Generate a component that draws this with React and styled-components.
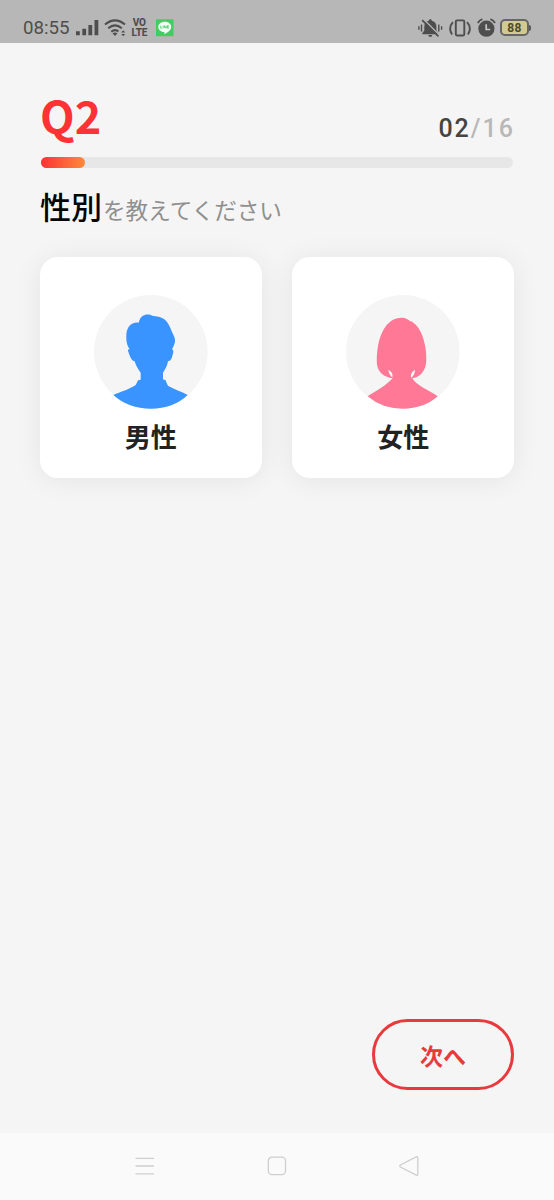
import styled, { createGlobalStyle } from "styled-components";

function App() {
	return (
		<Screen>
			<GlobalStyle />
			<StatusBar>
				<StatusGroup>
					<Clock>08:55</Clock>
					<SignalIcon />
					<WifiIcon />
					<VolteMark>
						<VolteLine>VO</VolteLine>
						<VolteLine>LTE</VolteLine>
					</VolteMark>
					<LineIcon />
				</StatusGroup>
				<StatusGroup>
					<MutedIcon />
					<VibrateIcon />
					<AlarmIcon />
					<Battery>
						<BatteryBody>88</BatteryBody>
						<BatteryTip />
					</Battery>
				</StatusGroup>
			</StatusBar>
			<Content>
				<QuestionHeader>
					<QuestionNumber>Q2</QuestionNumber>
					<Counter>
						<CounterNow>02</CounterNow>/16
					</Counter>
				</QuestionHeader>
				<ProgressTrack>
					<ProgressFill />
				</ProgressTrack>
				<Question>
					<Keyword>性別</Keyword>を教えてください
				</Question>
				<CardList>
					<Card>
						<MaleAvatar />
						<CardLabel>男性</CardLabel>
					</Card>
					<Card>
						<FemaleAvatar />
						<CardLabel>女性</CardLabel>
					</Card>
				</CardList>
				<NextButton>次へ</NextButton>
			</Content>
			<NavBar>
				<svg width="20" height="20" viewBox="0 0 20 20" fill="none" stroke="#cecece" strokeWidth="1.3">
					<path d="M0.5 2.4H19M0.5 10H19M0.5 17.8H19" />
				</svg>
				<svg width="20" height="20" viewBox="0 0 20 20" fill="none" stroke="#cecece" strokeWidth="1.3">
					<rect x="1.3" y="1.2" width="17.2" height="17.4" rx="3.6" />
				</svg>
				<svg width="20" height="20" viewBox="0 0 20 20" fill="none" stroke="#cecece" strokeWidth="1.3">
					<path d="M17.2 0.8 1.4 9Q0 10 1.4 11L17.2 19.2Q18.8 19.8 18.8 18V2Q18.8 0.2 17.2 0.8Z" />
				</svg>
			</NavBar>
		</Screen>
	);
}

function SignalIcon() {
	return (
		<Icon width="23" height="18" viewBox="0 0 23 18" $left="7.3px">
			<path d="M0 12.3h3.8v4H0zM6.3 9.7h3.8v6.6H6.3zM12.4 6h3.8v10.3h-3.8zM18.5 1h3.8v15.3h-3.8z" fill="#4e4e4e" />
		</Icon>
	);
}
function WifiIcon() {
	return (
		<Icon width="23" height="18" viewBox="0 0 23 18" $left="5px">
			<g fill="none" stroke="#4e4e4e" strokeWidth="2.1">
				<path d="M1 5.5Q11 -2.6 21 5.5" />
				<path d="M4.2 9.2Q11 3.4 17.8 9.2" />
				<path d="M7.3 12.7Q11 9.6 14.4 12.4" />
			</g>
			<path d="M8.5 14.2Q11 12.6 13.5 14.2L11 17Z" fill="#4e4e4e" />
			<path d="m19.2 11.2 2 2.4h-4zM19.2 17.3l-2-2.4h4z" fill="#4e4e4e" />
		</Icon>
	);
}
function LineIcon() {
	return (
		<Icon width="18" height="18" viewBox="0 0 18 18" $left="8.5px">
			<path d="M0 0.3H17.5V17.2H0Z" fill="#43cc62" />
			<path d="M8.8 2.8c-3.7 0-6.5 2.2-6.5 5.2 0 2.7 2.4 4.8 5.7 5.1.6.1.6.7.4 2.1 3.2-1.7 6.8-4 6.8-7.2 0-3-2.8-5.2-6.4-5.2Z" fill="#f8fff9" />
			<path d="M4.7 6.6v2.6h1.4M7.1 6.6v2.6M8.3 9.2V6.6l1.8 2.6V6.6M12.9 6.6h-1.5v2.6h1.5M11.4 7.9h1.4" fill="none" stroke="#43cc62" strokeWidth="0.8" />
		</Icon>
	);
}
function MutedIcon() {
	return (
		<Icon width="25" height="20" viewBox="0 0 25 20">
			<path d="M12.3 1.2c.9 0 1.5.5 1.5 1.5 3 .7 4.6 3 4.6 5.7v4.2l2 2.6v1H4.3v-1l2-2.6V8.4c0-2.7 1.5-5 4.5-5.7 0-1 .6-1.5 1.5-1.5ZM10.3 17h4q-.3 1.9-2 1.9t-2-1.9Z" fill="#4e4e4e" />
			<path d="M5.3 1 21.6 17.2" stroke="#b7b7b7" strokeWidth="1.4" />
			<path d="M4.2 2.1 20.4 18.3" stroke="#4e4e4e" strokeWidth="1.7" />
			<path d="M.9 8.3v3.4M3.5 6.5v7M20.8 6.5v7M23.6 8.3v3.4" stroke="#4e4e4e" strokeWidth="1.4" />
		</Icon>
	);
}
function VibrateIcon() {
	return (
		<Icon width="22" height="20" viewBox="0 0 22 20" $left="6px">
			<g fill="none" stroke="#4e4e4e" strokeWidth="1.9">
				<rect x="6.8" y="2.4" width="8.5" height="15.1" rx="1.2" />
				<path d="M3.9 4.2Q-1.2 10 3.1 16.6M18.1 4.2Q23.2 10 18.9 16.6" />
			</g>
		</Icon>
	);
}
function AlarmIcon() {
	return (
		<Icon width="19" height="20" viewBox="0 0 19 20" $left="6.3px">
			<circle cx="9.4" cy="10.7" r="8.1" fill="#4e4e4e" />
			<path d="M.8 5Q2.3 2.2 5.4 1.1M18 5Q16.5 2.2 13.4 1.1" fill="none" stroke="#4e4e4e" strokeWidth="1.8" />
			<path d="M9.2 6.2v5.3h4" fill="none" stroke="#c6c6c6" strokeWidth="1.7" />
		</Icon>
	);
}
function MaleAvatar() {
	return (
		<Avatar viewBox="41 44 341 341">
			<circle cx="211.5" cy="214.5" r="170.5" fill="#f5f5f5" />
			<path
				d="M178 118C184 101 205 99 216 106C228 108 242 109 252 117C262 125 269 139 275 155C280 165 285 173 284 184C282 194 278 200 275 207C280 208 280 215 277 223C274 235 271 242 263 243C260 258 255 267 248 277V297L256 300C258 306 260 313 264 317C281 326 303 334 322 344Q279 385 211.5 385Q144 385 99 344C120 335 148 326 166 314C169 309 171 304 173 300L181 298V277C173 267 167 256 163 243C153 240 149 229 144 214C141 209 144 205 148 207C140 194 137 184 138 164C139 140 153 124 175 127Q176 122 178 118Z"
				fill="#3a94ff"
			/>
		</Avatar>
	);
}
function FemaleAvatar() {
	return (
		<Avatar viewBox="41 44 341 341">
			<circle cx="211.5" cy="214.5" r="170.5" fill="#f5f5f5" />
			<path
				d="M208 112C220 112 230 118 234 123Q239 123 243 127C266 143 278 182 281 216C282 231 283 247 279 259C273 278 260 290 240 294C251 315 291 330 316 348Q275 385 211.5 385Q149 385 106 348C130 333 162 315 181 294C155 290 142 279 136 261C132 248 133 224 136 204C142 161 163 112 208 112Z"
				fill="#ff7895"
			/>
			<path d="M168 268C177 273 183 281 180 291C174 285 170 281 168 268ZM248 268C247 280 244 287 237 292C233 282 239 274 248 268Z" fill="#fafafa" />
		</Avatar>
	);
}

const GlobalStyle = createGlobalStyle`
	* {
		box-sizing: border-box;
	}
	body {
		margin: 0;
		background-color: #f5f5f5;
		font-family: "Noto Sans CJK JP", sans-serif;
	}
`;
const Screen = styled.div`
	width: 554px;
	height: 1200px;
	background-color: #f5f5f5;
	display: flex;
	flex-direction: column;
	overflow: hidden;
`;
const StatusBar = styled.div`
	height: 43px;
	padding: 12px 23px 0 23px;
	background-color: #b7b7b7;
	display: flex;
	justify-content: space-between;
	flex-shrink: 0;
`;
const StatusGroup = styled.div`
	height: 31px;
	display: flex;
	align-items: center;
`;
const Icon = styled.svg`
	margin-left: ${({ $left }) => $left || "0"};
	flex-shrink: 0;
`;
const Clock = styled.div`
	width: 46px;
	font-family: Roboto, sans-serif;
	font-size: 18.7px;
	line-height: 31px;
	padding-top: 2px;
	color: #4e4e4e;
`;
const VolteMark = styled.div`
	width: 17px;
	margin-left: 3.5px;
	display: flex;
	flex-direction: column;
	align-items: center;
`;
const VolteLine = styled.div`
	font-family: Roboto, sans-serif;
	font-size: 10px;
	font-weight: 800;
	line-height: 9.4px;
	letter-spacing: -0.2px;
	color: #4e4e4e;
`;
const Battery = styled.div`
	margin-left: 4px;
	display: flex;
	align-items: center;
`;
const BatteryBody = styled.div`
	width: 29px;
	height: 17px;
	border: 2px solid #666666;
	border-radius: 5px;
	background-color: #d2ca91;
	font-family: Roboto, sans-serif;
	font-size: 12px;
	font-weight: 700;
	line-height: 14px;
	letter-spacing: 0.4px;
	text-align: center;
	color: #4f4a2c;
`;
const BatteryTip = styled.div`
	width: 2px;
	height: 6px;
	background-color: #5a5a5a;
	border-radius: 0 2px 2px 0;
`;
const Content = styled.div`
	padding: 0 40px 43px 40px;
	display: flex;
	flex-direction: column;
	flex: 1;
`;
const QuestionHeader = styled.div`
	height: 114px;
	padding: 0 0 0 1px;
	display: flex;
	justify-content: space-between;
	align-items: flex-start;
`;
const QuestionNumber = styled.div`
	padding-top: 42px;
	margin-left: -1px;
	font-size: 45px;
	font-weight: 700;
	line-height: 60px;
	color: #fc3234;
`;
const Counter = styled.div`
	padding-top: 71px;
	margin-right: -1px;
	font-family: Roboto, sans-serif;
	font-size: 25px;
	font-weight: 500;
	line-height: 30px;
	letter-spacing: 2px;
	color: #b8b8b8;
`;
const CounterNow = styled.span`
	color: #444444;
`;
const ProgressTrack = styled.div`
	width: 472px;
	height: 11px;
	margin-left: 1px;
	border-radius: 6px;
	background-color: #e7e7e7;
	flex-shrink: 0;
`;
const ProgressFill = styled.div`
	width: 43.5px;
	height: 11px;
	border-radius: 6px;
	background: linear-gradient(90deg, #fc3234, #fd8a3c);
`;
const Question = styled.div`
	height: 88.5px;
	padding-top: 15px;
	font-size: 22.6px;
	line-height: 46px;
	color: #8f8f8f;
	white-space: nowrap;
`;
const Keyword = styled.span`
	margin-right: 1px;
	font-size: 31px;
	font-weight: 500;
	color: #050505;
`;
const CardList = styled.div`
	display: flex;
	justify-content: space-between;
`;
const Card = styled.div`
	width: 221.6px;
	height: 221.6px;
	padding-top: 38.5px;
	border-radius: 18px;
	background-color: #ffffff;
	box-shadow: 0 2px 28px rgba(0, 0, 0, 0.07);
	display: flex;
	flex-direction: column;
	align-items: center;
`;
const Avatar = styled.svg`
	width: 113.7px;
	height: 113.7px;
	flex-shrink: 0;
`;
const CardLabel = styled.div`
	margin-top: 8.8px;
	font-size: 26px;
	font-weight: 700;
	line-height: 38px;
	color: #222222;
`;
const NextButton = styled.button`
	width: 142px;
	height: 71px;
	margin-top: auto;
	padding: 1px 0 0 0;
	align-self: flex-end;
	border: 3px solid #e83a3d;
	border-radius: 36px;
	background-color: transparent;
	font-family: inherit;
	font-size: 23px;
	font-weight: 700;
	color: #e83a3d;
`;
const NavBar = styled.div`
	height: 67px;
	padding: 0 135px 1px 135px;
	background-color: #fafafa;
	display: flex;
	justify-content: space-between;
	align-items: center;
	flex-shrink: 0;
`;

export default App;
